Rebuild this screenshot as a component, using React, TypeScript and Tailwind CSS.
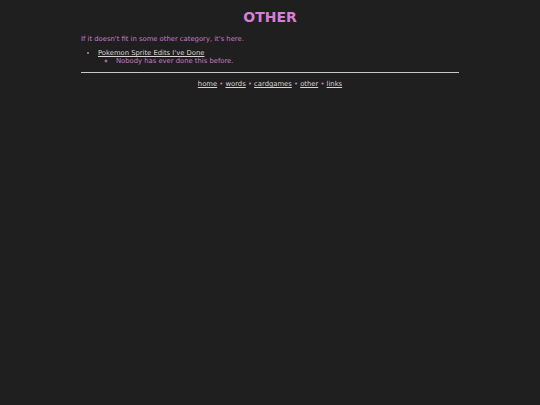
import React from "react";

export default function App() {
  const links = ["home", "words", "cardgames", "other", "links"];
  return (
    <div className="min-h-[405px] w-full bg-[#201f20] text-[#c77cc7] text-[6.8px] leading-[8px]" style={{ fontFamily: '"DejaVu Sans", Verdana, sans-serif' }}>
      <div className="mx-auto w-[378px] pt-[9px]">
        <h1 className="text-center text-[14px] leading-[17px] font-bold text-[#d580d5]">OTHER</h1>
        <p className="mt-[9px]">If it doesn't fit in some other category, it's here.</p>
        <ul className="mt-[6px] pl-[17px] list-disc">
          <li>
            <a href="#" className="text-[#d8d4d0] underline">Pokemon Sprite Edits I've Done</a>
            <ul className="pl-[18px] list-[circle]">
              <li>Nobody has ever done this before.</li>
            </ul>
          </li>
        </ul>
        <hr className="mt-[7px] border-0 h-px bg-[#c8c8c8]" />
        <div className="mt-[7px] text-center">
          {links.map((l, i) => (
            <React.Fragment key={l}>
              {i > 0 && <span className="text-[#c77cc7]"> • </span>}
              <a href="#" className="text-[#d8d4d0] underline">{l}</a>
            </React.Fragment>
          ))}
        </div>
      </div>
    </div>
  );
}
